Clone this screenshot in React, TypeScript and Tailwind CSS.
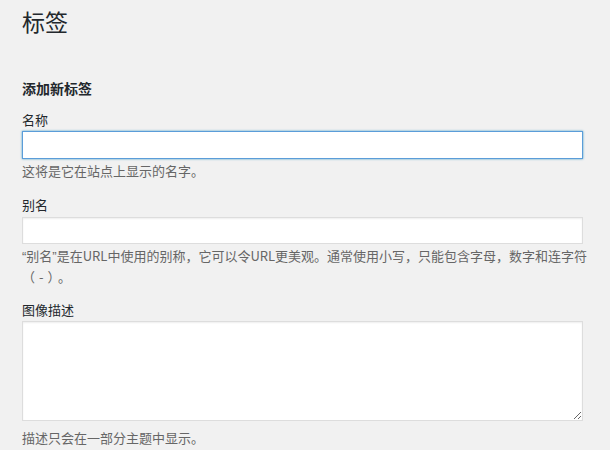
const font = "font-['Noto_Sans_CJK_SC',_'Noto_Sans',_sans-serif]";

export default function App() {
  return (
    <div className={`min-h-[450px] bg-[#f1f1f1] pl-[22px] pt-[7px] text-[#23282d] ${font}`}>
      <h1 className="text-[23px] font-normal leading-[29px]">标签</h1>
      <h2 className="mt-[42px] text-[14px] font-semibold leading-[20px]">添加新标签</h2>

      <div className="mt-[12px]">
        <label className="block text-[13px] leading-[20px]">名称</label>
        <input
          type="text"
          className="mt-[1px] block h-[28px] w-[561px] border border-[#5b9dd9] bg-white shadow-[0_0_2px_rgba(30,140,190,0.8)] outline-none"
        />
        <p className="mt-[2px] text-[13px] leading-[20px] text-[#666]">这将是它在站点上显示的名字。</p>
      </div>

      <div className="mt-[14px]">
        <label className="block text-[13px] leading-[20px]">别名</label>
        <input
          type="text"
          className="mt-[2px] block h-[27px] w-[561px] border border-[#ddd] bg-white shadow-[inset_0_1px_2px_rgba(0,0,0,0.07)] outline-none"
        />
        <p className="mt-[2px] text-[13px] leading-[20px] text-[#666]">
          <span className="font-['Liberation_Sans']">“</span>别名<span className="font-['Liberation_Sans']">”</span>是在URL中使用的别称，它可以令URL更美观。通常使用小写，只能包含字母，数字和连字符
          <br />
          <span className="tracking-[4px]">（-）</span>。
        </p>
      </div>

      <div className="mt-[13px]">
        <label className="block text-[13px] leading-[20px]">图像描述</label>
        <textarea className="mt-[1px] block h-[100px] w-[561px] border border-[#ddd] bg-white shadow-[inset_0_1px_2px_rgba(0,0,0,0.07)] outline-none" />
        <p className="mt-[7px] text-[13px] leading-[20px] text-[#666]">描述只会在一部分主题中显示。</p>
      </div>
    </div>
  );
}
